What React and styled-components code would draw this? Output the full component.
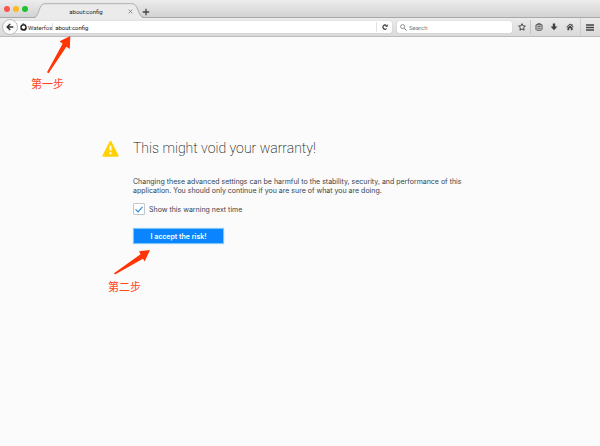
import { useState } from "react";
import styled, { createGlobalStyle } from "styled-components";

const App = () => {
    const [url, setUrl] = useState("about:config");
    const [search, setSearch] = useState("");
    const [showWarning, setShowWarning] = useState(true);

    return <>
        <GlobalStyle />
        <Browser>
            <TabStrip>
                <WindowButtons>
                    <WindowButton aria-label="Close window" $color="#f9544d" />
                    <WindowButton aria-label="Minimize window" $color="#fbb924" />
                    <WindowButton aria-label="Zoom window" $color="#1fc231" />
                </WindowButtons>
                <Tab>
                    <TabShape />
                    <TabTitle>about:config</TabTitle>
                    <TabClose aria-label="Close tab"><CloseIcon /></TabClose>
                </Tab>
                <NewTab aria-label="New tab"><PlusIcon /></NewTab>
            </TabStrip>

            <Toolbar>
                <BackButton aria-label="Back"><BackIcon /></BackButton>
                <UrlBar>
                    <Identity><WaterfoxIcon />Waterfox</Identity>
                    <BarInput aria-label="Address" value={url} onChange={(e) => setUrl(e.target.value)} />
                    <ReloadButton aria-label="Reload"><ReloadIcon /></ReloadButton>
                </UrlBar>
                <SearchBar>
                    <SearchIcon />
                    <BarInput type="search" aria-label="Search" placeholder="Search" value={search} onChange={(e) => setSearch(e.target.value)} />
                </SearchBar>
                <Actions>
                    <IconButton aria-label="Bookmark"><StarIcon /></IconButton>
                    <IconButton aria-label="Bookmarks menu" $line><ClipboardIcon /></IconButton>
                    <IconButton aria-label="Downloads"><DownloadIcon /></IconButton>
                    <IconButton aria-label="Home"><HomeIcon /></IconButton>
                </Actions>
                <MenuButton aria-label="Menu"><MenuIcon /></MenuButton>
            </Toolbar>

            <Page>
                <Warning>
                    <WarningIcon />
                    <Title>This might void your warranty!</Title>
                    <Text>Changing these advanced settings can be harmful to the stability, security, and performance of this application. You should only continue if you are sure of what you are doing.</Text>
                    <CheckLabel>
                        <Checkbox type="checkbox" checked={showWarning} onChange={(e) => setShowWarning(e.target.checked)} />
                        Show this warning next time
                    </CheckLabel>
                    <AcceptButton>I accept the risk!</AcceptButton>
                </Warning>

                {/* hand drawn notes on top of the page */}
                <Note $left={30} $top={-1}>
                    <FirstArrow />
                    <NoteText>第一步</NoteText>
                </Note>
                <Note $left={107} $top={210}>
                    <SecondArrow />
                    <NoteText>第二步</NoteText>
                </Note>
            </Page>
        </Browser>
    </>
}

export default App;


const TabShape = () => (
    <TabSvg viewBox="0 0 112 15" preserveAspectRatio="none" aria-hidden="true">
        <path d="M0 15C6 14 4 1 11 1H98C105 1 103 14 110 15Z" fill="#ebebeb" />
        <path d="M0 14.5C6 13.5 4 .7 11 .7H98C105 .7 103 13.5 110 14.5" fill="none" stroke="#a2a2a2" strokeWidth=".8" />
    </TabSvg>
)

const CloseIcon = () => (
    <svg width="5" height="5" viewBox="0 0 5 5"><path d="M.6.6 4.4 4.4M4.4.6.6 4.4" stroke="#777" strokeWidth=".8" /></svg>
)

const PlusIcon = () => (
    <svg width="8" height="8" viewBox="0 0 8 8"><path d="M4 .8V7.2M.8 4H7.2" stroke="#444" strokeWidth="1.3" /></svg>
)

const BackIcon = () => (
    <svg width="8" height="8" viewBox="0 0 8 8"><path d="M4.2.9 1.2 4 4.2 7.1M1.4 4H7.3" fill="none" stroke="#333" strokeWidth="1.5" /></svg>
)

const WaterfoxIcon = () => (
    <svg width="7" height="8" viewBox="0 0 7 8">
        <path d="M2.6.2C4.8.5 6.8 2 6.8 4.4A3.3 3.3 0 0 1 3.5 7.8 3.3 3.3 0 0 1 .2 4.5C.2 3.2.9 2.2 1.8 1.5L2.7 1.2ZM3.5 2.5A1.8 1.8 0 1 0 3.6 6.1 1.8 1.8 0 0 0 3.5 2.5Z" fill="#222" fillRule="evenodd" />
        <path d="M4 1.4 4.7 2.3M.3 5 1.5 4.7" stroke="#fff" strokeWidth=".4" />
    </svg>
)

const ReloadIcon = () => (
    <svg width="6" height="6" viewBox="0 0 6 6">
        <path d="M4.7 4.5A2.1 2.1 0 1 1 4.4 1.5" fill="none" stroke="#333" strokeWidth="1.1" />
        <path d="M5.7.2V2.8H3.1Z" fill="#333" />
    </svg>
)

const SearchIcon = () => (
    <svg width="7" height="7" viewBox="0 0 7 7" aria-hidden="true">
        <circle cx="2.6" cy="2.6" r="2" fill="none" stroke="#777" strokeWidth=".8" />
        <path d="M4.2 4.2 6.6 6.6" stroke="#777" strokeWidth="1" />
    </svg>
)

const StarIcon = () => (
    <svg width="8" height="8" viewBox="0 0 8 8">
        <path d="M4 .7 5 2.9 7.4 3.1 5.6 4.8 6.1 7.2 4 6 1.9 7.2 2.4 4.8.6 3.1 3 2.9Z" fill="none" stroke="#444" strokeWidth="1" strokeLinejoin="round" />
    </svg>
)

const ClipboardIcon = () => (
    <svg width="8" height="8" viewBox="0 0 8 8">
        <path d="M1 1.8H7V6.4L6.3 7.2H1.7L1 6.4Z" fill="none" stroke="#4a4a4a" strokeWidth="1" />
        <path d="M2.7 1.7V.7H5.3V1.7M2.3 3.6H5.7M2.3 5.3H5.7" fill="none" stroke="#4a4a4a" strokeWidth=".9" />
    </svg>
)

const DownloadIcon = () => (
    <svg width="8" height="8" viewBox="0 0 8 8"><path d="M2.8.6H5.2V3.6H7.4L4 7.3.6 3.6H2.8Z" fill="#404040" /></svg>
)

const HomeIcon = () => (
    <svg width="8" height="8" viewBox="0 0 8 8">
        <path d="M4 .6 5.5 2V1.1H6.5V2.9L7.8 4.1 7.2 4.6 4 1.8.8 4.6.2 4.1Z" fill="#444" />
        <path d="M4 2.4 6.6 4.7V7.3H4.8V5.2H3.2V7.3H1.4V4.7Z" fill="#444" />
    </svg>
)

const MenuIcon = () => (
    <svg width="8" height="7" viewBox="0 0 8 7"><path d="M0 1H8M0 3.5H8M0 6H8" stroke="#444" strokeWidth="1.3" /></svg>
)

const WarningIcon = () => (
    <svg width="17" height="17" viewBox="0 0 17 17" aria-hidden="true">
        <path d="M8.5 2 15.6 15.7H1.4Z" fill="#ffd106" stroke="#ffd106" strokeWidth="2" strokeLinejoin="round" />
        <path d="M8.5 5.8V10.6M8.5 12.2V14.2" stroke="#fff" strokeWidth="2" />
    </svg>
)

const FirstArrow = () => (
    <ArrowSvg width="44" height="38" viewBox="0 0 44 38" aria-hidden="true">
        <path d="M40.3 0 29.6 5.2 32.6 7.7 17 36.3 18.6 37.3 36.4 10.7 39.8 13Z" fill="#ff3507" />
    </ArrowSvg>
)

const SecondArrow = () => (
    <ArrowSvg width="44" height="30" viewBox="0 0 44 30" aria-hidden="true">
        <path d="M43 3 32 4.2 33.5 7.2 7 26.2 8 27.6 36 11.7 37.6 14.6Z" fill="#ff3507" />
    </ArrowSvg>
)


const GlobalStyle = createGlobalStyle`
*{
    box-sizing: border-box;
}
body{
    margin: 0;
    background: #fbfbfb;
    font-family: Inter, "Noto Sans CJK SC", sans-serif;
    font-size: 7px;
    color: #36434e;
}
button, input{
    font: inherit;
    color: inherit;
}
svg{
    display: block;
    flex: none;
}`;

const Browser = styled.div`
min-height: 100vh;
display: flex;
flex-direction: column;
`;

const TabStrip = styled.div`
height: 18px;
display: flex;
align-items: flex-end;
padding-left: 4px;
background: linear-gradient(#ececec, #d3d3d3);
border-bottom: 1px solid #a9a9a9;
font-family: Roboto, sans-serif;
font-size: 6px;
`;

const WindowButtons = styled.div`
display: flex;
align-self: center;
gap: 3px;
width: 30px;
`;

const PlainButton = styled.button`
display: grid;
place-items: center;
flex: none;
padding: 0;
border: none;
background: none;
`;

const WindowButton = styled(PlainButton)`
width: 6px;
height: 6px;
border-radius: 50%;
background: ${({ $color }) => $color};
`;

const Tab = styled.div`
position: relative;
display: flex;
align-items: center;
width: 112px;
height: 15px;
margin-bottom: -1px;
padding: 2px 13px 0 10px;
`;

const TabSvg = styled.svg`
position: absolute;
inset: 0;
width: 100%;
height: 100%;
`;

const TabTitle = styled.span`
position: relative;
flex: 1;
text-align: center;
color: #222;
`;

const TabClose = styled(PlainButton)`
position: relative;
`;

const NewTab = styled(PlainButton)`
height: 11px;
margin-left: -4px;
`;

const Toolbar = styled.div`
height: 19px;
display: flex;
align-items: center;
padding: 0 5px 0 2px;
background: linear-gradient(#ebebeb, #dadada);
border-bottom: 1px solid #bdbdbd;
font-family: Roboto, sans-serif;
font-size: 6px;
`;

const BackButton = styled(PlainButton)`
z-index: 1;
width: 16px;
height: 16px;
border: 1px solid #bcbcbc;
border-radius: 50%;
background: #fafafa;
`;

const Bar = styled.div`
display: flex;
align-items: center;
height: 12px;
background: #fff;
border-radius: 2px;
box-shadow: 0 0 1px #aaa;
`;

const UrlBar = styled(Bar)`
flex: 1;
margin-left: -6px;
padding-left: 8px;
`;

const SearchBar = styled(Bar)`
flex: 0 1 115px;
margin-left: 5px;
padding-left: 3px;
`;

const Identity = styled.span`
display: flex;
align-items: center;
gap: 1px;
border-right: 1px solid #ddd;
color: #333;
`;

const BarInput = styled.input`
flex: 1;
min-width: 0;
height: 12px;
padding: 0 2px;
border: none;
outline: none;
background: none;
color: #111;
appearance: none;
&::placeholder{
    color: #777;
}
`;

const ReloadButton = styled(PlainButton)`
width: 16px;
height: 10px;
border-left: 1px solid #e2e2e2;
`;

const Actions = styled.div`
display: flex;
padding: 0 2px;
`;

const IconButton = styled(PlainButton)`
width: 16px;
height: 14px;
border-left: ${({ $line }) => $line ? "1px solid #c4c4c4" : "none"};
`;

const MenuButton = styled(PlainButton)`
width: 15px;
height: 18px;
padding-left: 4px;
border-left: 1px solid #cfcfcf;
`;

const Page = styled.main`
position: relative;
flex: 1;
padding: 101px 50px 20px 20px;
`;

const Warning = styled.section`
display: grid;
grid-template-columns: 17px minmax(0, 335px);
column-gap: 14px;
justify-content: center;
align-items: center;
> :not(svg){
    grid-column: 2;
}
`;

const Title = styled.h1`
margin: 0;
font-family: Roboto, sans-serif;
font-size: 14px;
font-weight: 200;
line-height: 21px;
color: #111;
`;

const Text = styled.p`
margin: 18px 0 0;
line-height: 9px;
`;

const CheckLabel = styled.label`
display: flex;
align-items: center;
gap: 4px;
margin-top: 8px;
`;

const Checkbox = styled.input`
appearance: none;
display: grid;
place-items: center;
width: 12px;
height: 12px;
margin: 0;
border: 1px solid #c3c8cc;
border-radius: 1px;
background: #fff;
&:checked::after{
    content: "";
    width: 3px;
    height: 6px;
    margin-bottom: 2px;
    border: solid #1587d8;
    border-width: 0 1px 1px 0;
    transform: rotate(42deg);
}
`;

const AcceptButton = styled.button`
width: 91px;
height: 16px;
margin-top: 13px;
padding: 0;
border: 1px solid #7cc8fb;
box-shadow: 0 0 1px #8ed0fb;
background: #0a84ff;
color: #fff;
font-weight: 600;
`;

const Note = styled.div`
position: absolute;
left: ${({ $left }) => $left}px;
top: ${({ $top }) => $top}px;
`;

const ArrowSvg = styled.svg`
overflow: visible;
`;

const NoteText = styled.div`
margin-top: 1px;
padding-left: 1px;
font-size: 11px;
line-height: 18px;
color: #ff4420;
`;
